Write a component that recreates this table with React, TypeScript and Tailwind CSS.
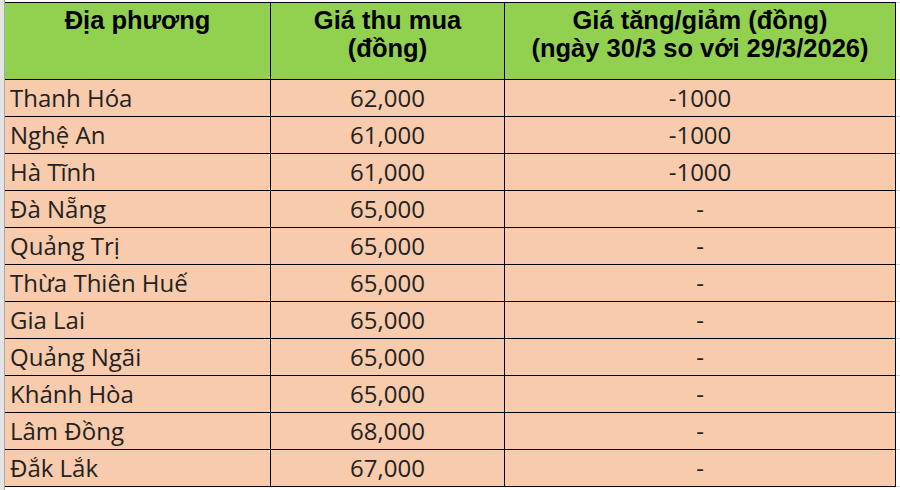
import React from "react";

const rows: [string, string, string][] = [
  ["Thanh Hóa", "62,000", "-1000"],
  ["Nghệ An", "61,000", "-1000"],
  ["Hà Tĩnh", "61,000", "-1000"],
  ["Đà Nẵng", "65,000", "-"],
  ["Quảng Trị", "65,000", "-"],
  ["Thừa Thiên Huế", "65,000", "-"],
  ["Gia Lai", "65,000", "-"],
  ["Quảng Ngãi", "65,000", "-"],
  ["Khánh Hòa", "65,000", "-"],
  ["Lâm Đồng", "68,000", "-"],
  ["Đắk Lắk", "67,000", "-"],
];

const head = "font-['Liberation_Sans',Arial,sans-serif] font-bold text-[25.5px] leading-[28px] text-black text-center pt-[3px] bg-[#92D050]";
const body = "font-['Open_Sans','Noto_Sans',sans-serif] text-[24px] leading-[36px] text-[#222] bg-[#F8CBAD]";

export default function App() {
  return (
    <div className="w-[900px] h-[490px] bg-white flex overflow-hidden">
      <div className="w-[4px] h-full bg-[#e4e4e4]" />
      <div className="w-[1px] h-full bg-[#a8a8a8]" />
      <div className="pt-[2px]">
        <div className="grid grid-cols-[265px_233px_390px] grid-rows-[76px_repeat(11,36px)] gap-px bg-black border-t border-r border-b border-black">
          <div className={head}>Địa phương</div>
          <div className={head}>
            Giá thu mua
            <br />
            (đồng)
          </div>
          <div className={head}>
            Giá tăng/giảm (đồng)
            <br />
            (ngày 30/3 so với 29/3/2026)
          </div>
          {rows.map((r) => (
            <React.Fragment key={r[0]}>
              <div className={`${body} pl-[5px]`}>{r[0]}</div>
              <div className={`${body} text-center`}>{r[1]}</div>
              <div className={`${body} text-center`}>{r[2]}</div>
            </React.Fragment>
          ))}
        </div>
      </div>
      <div className="flex-1 flex flex-col pt-[2px]">
        <div className="h-[1px] bg-[#d4d4d4]" />
        <div className="h-[76px]" />
        {rows.map((r) => (
          <React.Fragment key={r[0]}>
            <div className="h-[1px] bg-[#d4d4d4]" />
            <div className="h-[36px]" />
          </React.Fragment>
        ))}
        <div className="h-[1px] bg-[#d4d4d4]" />
      </div>
    </div>
  );
}
